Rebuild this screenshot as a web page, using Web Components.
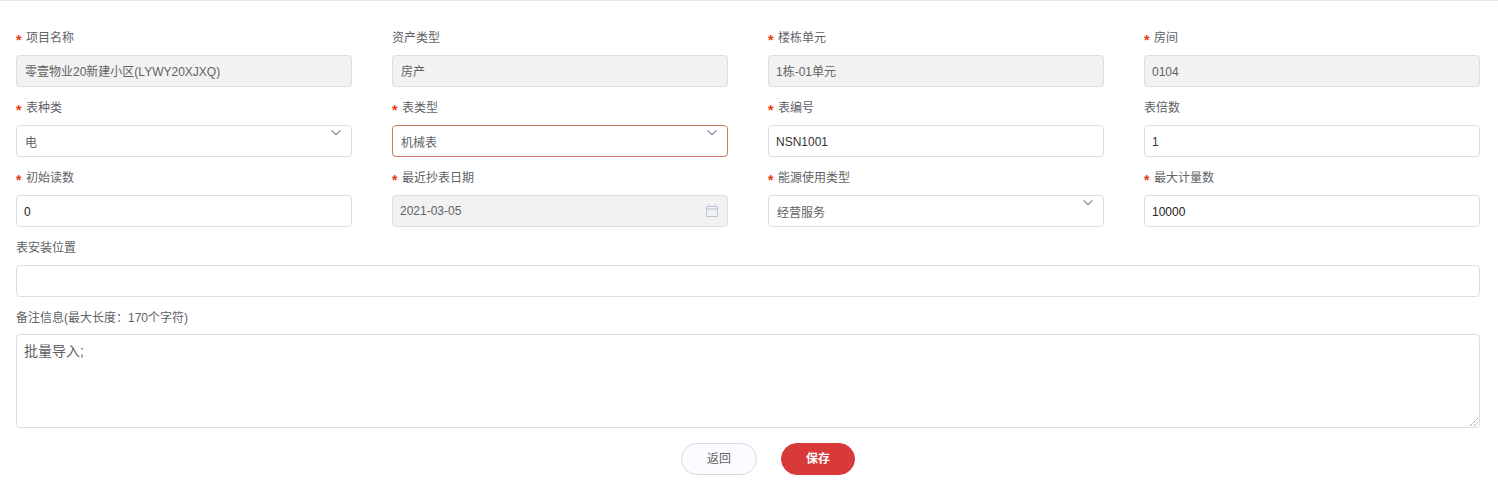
<!DOCTYPE html>
<html lang="zh">
<head>
<meta charset="utf-8">
<title>表信息</title>
<style>
    html, body { margin: 0; background: #fff; }
    body { font: 12px "Liberation Sans", "Noto Sans CJK SC", sans-serif; color: #606266; }
</style>
</head>
<body>
<meter-form>
    <form-field label="项目名称" required><field-box disabled indent>零壹物业20新建小区(LYWY20XJXQ)</field-box></form-field>
    <form-field label="资产类型"><field-box disabled indent>房产</field-box></form-field>
    <form-field label="楼栋单元" required><field-box disabled>1栋-01单元</field-box></form-field>
    <form-field label="房间" required><field-box disabled>0104</field-box></form-field>

    <form-field label="表种类" required><field-box kind="select">电</field-box></form-field>
    <form-field label="表类型" required><field-box kind="select" error>机械表</field-box></form-field>
    <form-field label="表编号" required><field-box>NSN1001</field-box></form-field>
    <form-field label="表倍数"><field-box>1</field-box></form-field>

    <form-field label="初始读数" required><field-box strong>0</field-box></form-field>
    <form-field label="最近抄表日期" required><field-box kind="date" disabled>2021-03-05</field-box></form-field>
    <form-field label="能源使用类型" required><field-box kind="select">经营服务</field-box></form-field>
    <form-field label="最大计量数" required><field-box strong>10000</field-box></form-field>

    <form-field class="wide" label="表安装位置"><field-box></field-box></form-field>
    <form-field class="wide notes" label="备注信息(最大长度：170个字符)"><note-box>批量导入;</note-box></form-field>

    <form-actions>
        <pill-button>返回</pill-button>
        <pill-button primary>保存</pill-button>
    </form-actions>
</meter-form>

<script>
class MeterForm extends HTMLElement {
    constructor() {
        super();
        this.attachShadow({ mode: 'open' });
        this.shadowRoot.innerHTML = /*html*/ `
        <style>
            :host {
                display: block;
                box-sizing: border-box;
                height: 484px;
                border-top: 1px solid #e6e6e6;
                padding: 19px 18px 0 16px;
            }
            .grid {
                display: grid;
                grid-template-columns: repeat(4, 336px);
                column-gap: 40px;
            }
            ::slotted(.wide) { grid-column: 1 / -1; }
            ::slotted(form-actions) { grid-column: 1 / -1; }
        </style>
        <div class="grid"><slot></slot></div>
        `;
    }
}
customElements.define('meter-form', MeterForm);

class FormField extends HTMLElement {
    constructor() {
        super();
        this.attachShadow({ mode: 'open' });
    }

    connectedCallback() {
        const required = this.hasAttribute('required');
        this.shadowRoot.innerHTML = /*html*/ `
        <style>
            :host {
                display: block;
                height: 70px;
            }
            :host(.notes) { height: auto; }
            .label {
                display: flex;
                height: 35px;
                color: #606266;
                line-height: 37px;
            }
            :host(.notes) .label { height: 34px; }
            /* star glyph is drawn a bit bigger than the label text */
            .star {
                width: 10px;
                color: #e8380d;
                font-size: 14px;
                font-weight: bold;
                line-height: 40px;
            }
        </style>
        <div class="label">${required ? '<span class="star">*</span>' : ''}<span>${this.getAttribute('label')}</span></div>
        <slot></slot>
        `;
    }
}
customElements.define('form-field', FormField);

class FieldBox extends HTMLElement {
    constructor() {
        super();
        this.attachShadow({ mode: 'open' });
    }

    connectedCallback() {
        const kind = this.getAttribute('kind');
        let icon = '';
        if (kind === 'select') {
            icon = `<svg class="arrow" width="12" height="8" viewBox="0 0 12 8"><path d="M1.5 1.5 6 5.5l4.5-4" fill="none" stroke="#8a94a6" stroke-width="1.4"/></svg>`;
        }
        if (kind === 'date') {
            icon = `<svg class="calendar" width="14" height="14" viewBox="0 0 14 14" fill="none" stroke="#bcc8d8"><path d="M1.5 2.5h11v10h-11zM1.5 5h11M4 .5v3M10 .5v3"/></svg>`;
        }
        this.shadowRoot.innerHTML = /*html*/ `
        <style>
            :host {
                display: block;
                position: relative;
                box-sizing: border-box;
                height: 32px;
                padding: 0 7px;
                background: #fff;
                border: 1px solid #dedede;
                border-radius: 4px;
                color: #333;
                line-height: 33px;
            }
            :host([disabled]) {
                background: #f2f2f2;
                color: #606266;
            }
            :host([indent]) { padding: 0 8px; }
            :host([kind="select"]) {
                padding: 0 8px;
                color: #606266;
                line-height: 35px;
            }
            :host([kind="date"]) { line-height: 31px; }
            :host([error]) { border-color: #cb7a66; }
            :host([strong]) { color: #222; }
            .arrow {
                position: absolute;
                top: 3px;
                right: 9px;
            }
            .calendar {
                position: absolute;
                top: 8px;
                right: 8px;
            }
        </style>
        <slot></slot>${icon}
        `;
    }
}
customElements.define('field-box', FieldBox);

class NoteBox extends HTMLElement {
    constructor() {
        super();
        this.attachShadow({ mode: 'open' });
    }

    connectedCallback() {
        this.shadowRoot.innerHTML = /*html*/ `
        <style>
            :host {
                display: block;
                position: relative;
                box-sizing: border-box;
                height: 94px;
                padding: 6px 7px;
                border: 1px solid #dedede;
                border-radius: 4px;
                color: #606266;
                font-size: 14px;
                line-height: 20px;
            }
            svg {
                position: absolute;
                right: 0;
                bottom: 0;
            }
        </style>
        <slot></slot>
        <svg width="10" height="10" viewBox="0 0 10 10" stroke="#777" stroke-dasharray="1 1">
            <path d="M1 9 9 1M5 9l4-4"/>
        </svg>
        `;
    }
}
customElements.define('note-box', NoteBox);

class FormActions extends HTMLElement {
    constructor() {
        super();
        this.attachShadow({ mode: 'open' });
        this.shadowRoot.innerHTML = /*html*/ `
        <style>
            :host {
                display: flex;
                justify-content: center;
                gap: 24px;
                padding: 15px 0 0 40px;
            }
        </style>
        <slot></slot>
        `;
    }
}
customElements.define('form-actions', FormActions);

class PillButton extends HTMLElement {
    constructor() {
        super();
        this.attachShadow({ mode: 'open' });
        this.shadowRoot.innerHTML = /*html*/ `
        <style>
            :host {
                display: block;
                box-sizing: border-box;
                width: 76px;
                height: 32px;
                background: #fdfbff;
                border: 1px solid #d9d9e3;
                border-radius: 16px;
                color: #606266;
                line-height: 30px;
                text-align: center;
            }
            :host([primary]) {
                width: 74px;
                background: #d83a3a;
                border-color: #d83a3a;
                color: #fff;
                font-weight: bold;
            }
        </style>
        <slot></slot>
        `;
    }
}
customElements.define('pill-button', PillButton);
</script>
</body>
</html>
